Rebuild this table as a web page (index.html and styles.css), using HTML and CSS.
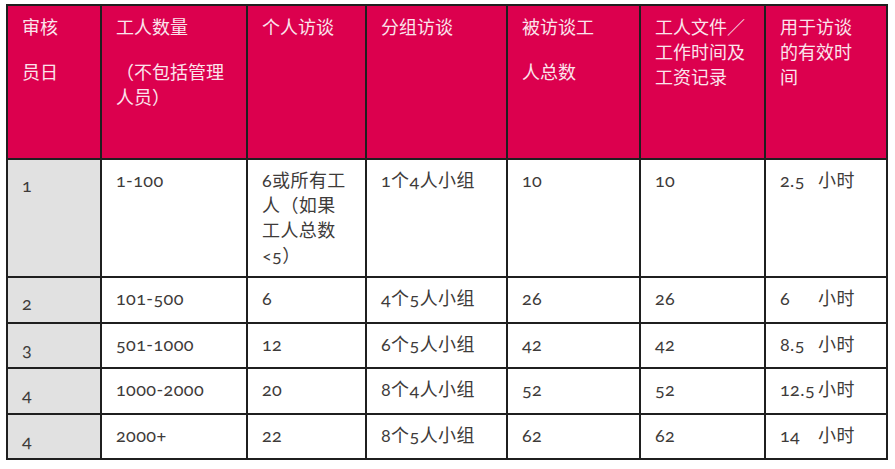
FILE: index.html
```html
<!DOCTYPE html>
<html lang="zh-CN">
<head>
<meta charset="utf-8">
<title>审核员日</title>
<link rel="stylesheet" href="styles.css">
</head>
<body>
<table class="grid">
  <colgroup>
    <col class="c1"><col class="c2"><col class="c3"><col class="c4"><col class="c5"><col class="c6"><col class="c7">
  </colgroup>
  <thead>
    <tr class="head">
      <th><div>审核</div><div class="gap">员日</div></th>
      <th><div>工人数量</div><div class="gap">（不包括管理<br>人员）</div></th>
      <th><div>个人访谈</div></th>
      <th><div>分组访谈</div></th>
      <th><div>被访谈工</div><div class="gap">人总数</div></th>
      <th><div>工人文件／<br>工作时间及<br>工资记录</div></th>
      <th><div>用于访谈<br>的有效时<br>间</div></th>
    </tr>
  </thead>
  <tbody>
    <tr class="r1">
      <td class="id">1</td>
      <td>1-100</td>
      <td>6或所有工<br>人（如果<br>工人总数<br>&lt;5）</td>
      <td>1个4人小组</td>
      <td>10</td>
      <td>10</td>
      <td><span class="num">2.5</span>小时</td>
    </tr>
    <tr class="rs">
      <td class="id">2</td>
      <td>101-500</td>
      <td>6</td>
      <td>4个5人小组</td>
      <td>26</td>
      <td>26</td>
      <td><span class="num">6</span>小时</td>
    </tr>
    <tr class="rs">
      <td class="id">3</td>
      <td>501-1000</td>
      <td>12</td>
      <td>6个5人小组</td>
      <td>42</td>
      <td>42</td>
      <td><span class="num">8.5</span>小时</td>
    </tr>
    <tr class="rs">
      <td class="id">4</td>
      <td>1000-2000</td>
      <td>20</td>
      <td>8个4人小组</td>
      <td>52</td>
      <td>52</td>
      <td><span class="num">12.5</span>小时</td>
    </tr>
    <tr class="rs">
      <td class="id">4</td>
      <td>2000+</td>
      <td>22</td>
      <td>8个5人小组</td>
      <td>62</td>
      <td>62</td>
      <td><span class="num">14</span>小时</td>
    </tr>
  </tbody>
</table>
</body>
</html>
```

FILE: styles.css
```css
html, body {
  margin: 0;
  padding: 0;
  background: #ffffff;
}

body {
  padding: 4px 0 0 6px;
  font-family: "Lato", "Noto Sans CJK SC", sans-serif;
  font-variant-numeric: oldstyle-nums;
}

.grid {
  border-collapse: collapse;
  table-layout: fixed;
  width: 880px;
}

.c1 { width: 94px; }
.c2 { width: 146px; }
.c3 { width: 119px; }
.c4 { width: 141px; }
.c5 { width: 133px; }
.c6 { width: 125px; }
.c7 { width: 122px; }

.grid th,
.grid td {
  border: 2px solid #1f1f1f;
  vertical-align: top;
  text-align: left;
  padding: 8px 6px 0 14px;
  font-size: 18px;
  line-height: 25px;
}

.grid th {
  background: #dc004e;
  color: #fbe4ec;
  font-weight: normal;
  font-family: "Noto Sans CJK SC", sans-serif;
}

.grid td {
  color: #3e3b3a;
  background: #ffffff;
  letter-spacing: 0.4px;
}

.grid td.id {
  background: #e1e1e1;
  padding-top: 13px;
}

.gap {
  margin-top: 20px;
}

.head { height: 154px; }
.r1 { height: 118px; }
.rs { height: 45.5px; }

.num {
  display: inline-block;
  width: 38px;
}
```
